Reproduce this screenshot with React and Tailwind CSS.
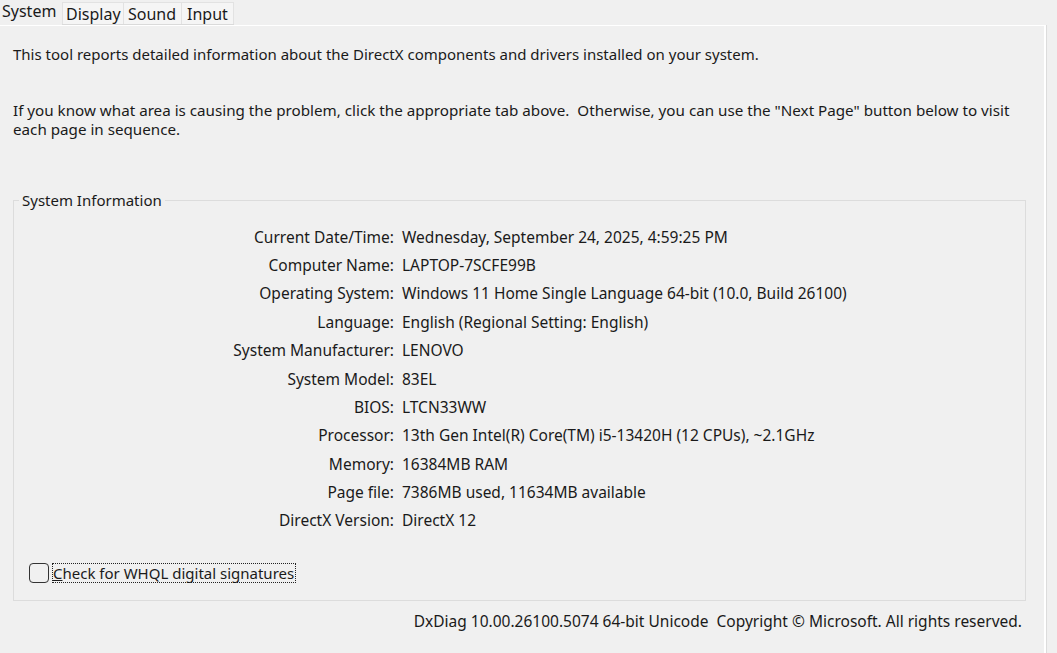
import React from 'react'

const rows = [
  ['Current Date/Time:', 'Wednesday, September 24, 2025, 4:59:25 PM'],
  ['Computer Name:', 'LAPTOP-7SCFE99B'],
  ['Operating System:', 'Windows 11 Home Single Language 64-bit (10.0, Build 26100)'],
  ['Language:', 'English (Regional Setting: English)'],
  ['System Manufacturer:', 'LENOVO'],
  ['System Model:', '83EL'],
  ['BIOS:', 'LTCN33WW'],
  ['Processor:', '13th Gen Intel(R) Core(TM) i5-13420H (12 CPUs), ~2.1GHz'],
  ['Memory:', '16384MB RAM'],
  ['Page file:', '7386MB used, 11634MB available'],
  ['DirectX Version:', 'DirectX 12'],
]

export default function App() {
  return (
    <div className="h-[653px] w-[1057px] overflow-hidden bg-[#f0f0f0] text-[15px] text-[#1a1a1a] [font-family:'Noto_Sans',sans-serif]">
      {/* tabs */}
      <div className="flex h-[25px] items-end">
        <div className="h-[25px] w-[62px] pl-[2px] pt-[1px] text-[16px] leading-[20px]">System</div>
        <div className="flex h-[23px] border-b border-[#dadada]">
          <div className="w-[62px] border-l border-r border-t border-[#e2e2e2] bg-[#f5f5f5] pl-[3px] text-[16px] leading-[22px]">Display</div>
          <div className="w-[58px] border-r border-t border-[#e2e2e2] bg-[#f5f5f5] pl-[4px] text-[16px] leading-[22px]">Sound</div>
          <div className="w-[52px] border-r border-t border-[#e2e2e2] bg-[#f5f5f5] pl-[5px] text-[16px] leading-[22px]">Input</div>
        </div>
        <div className="h-[1px] flex-1" />
      </div>

      {/* panel */}
      <div className="flex">
        <div className="h-[628px] w-[1046px] border-r-2 border-t border-r-white border-t-white shadow-[1px_0_0_#dcdcdc]">
          <div className="pl-[13px] pt-[18px]">
            <p className="leading-[20px]">This tool reports detailed information about the DirectX components and drivers installed on your system.</p>
            <p className="mt-[37px] text-[15.2px] leading-[19px]">
              If you know what area is causing the problem, click the appropriate tab above.&nbsp; Otherwise, you can use the "Next Page" button below to visit
              <br />each page in sequence.
            </p>
          </div>

          {/* group box */}
          <div className="relative ml-[13px] mt-[61px] h-[401px] w-[1013px] border border-[#dcdcdc]">
            <div className="absolute left-[5px] top-[-11px] bg-[#f0f0f0] px-[3px] leading-[20px]">System Information</div>
            <div className="flex flex-col pt-[22px] text-[15.5px]">
              {rows.map(([k, v]) => (
                <div key={k} className="flex h-[28.4px] items-center">
                  <div className="w-[380px] text-right">{k}</div>
                  <div className="pl-[8px]">{v}</div>
                </div>
              ))}
            </div>
            <div className="absolute left-[15px] top-[362px] flex items-center">
              <div className="h-[20px] w-[20px] rounded-[4px] border border-[#333]" />
              <div className="ml-[3px] border border-dotted border-[#222] pr-[1px] text-[15px] leading-[18px]">
                <span className="underline">C</span>heck for WHQL digital signatures
              </div>
            </div>
          </div>

          <div className="mt-[9px] pr-[22px] text-right text-[15.5px] leading-[22px]">
            DxDiag 10.00.26100.5074 64-bit Unicode&nbsp; Copyright © Microsoft. All rights reserved.
          </div>
        </div>
      </div>
    </div>
  )
}
